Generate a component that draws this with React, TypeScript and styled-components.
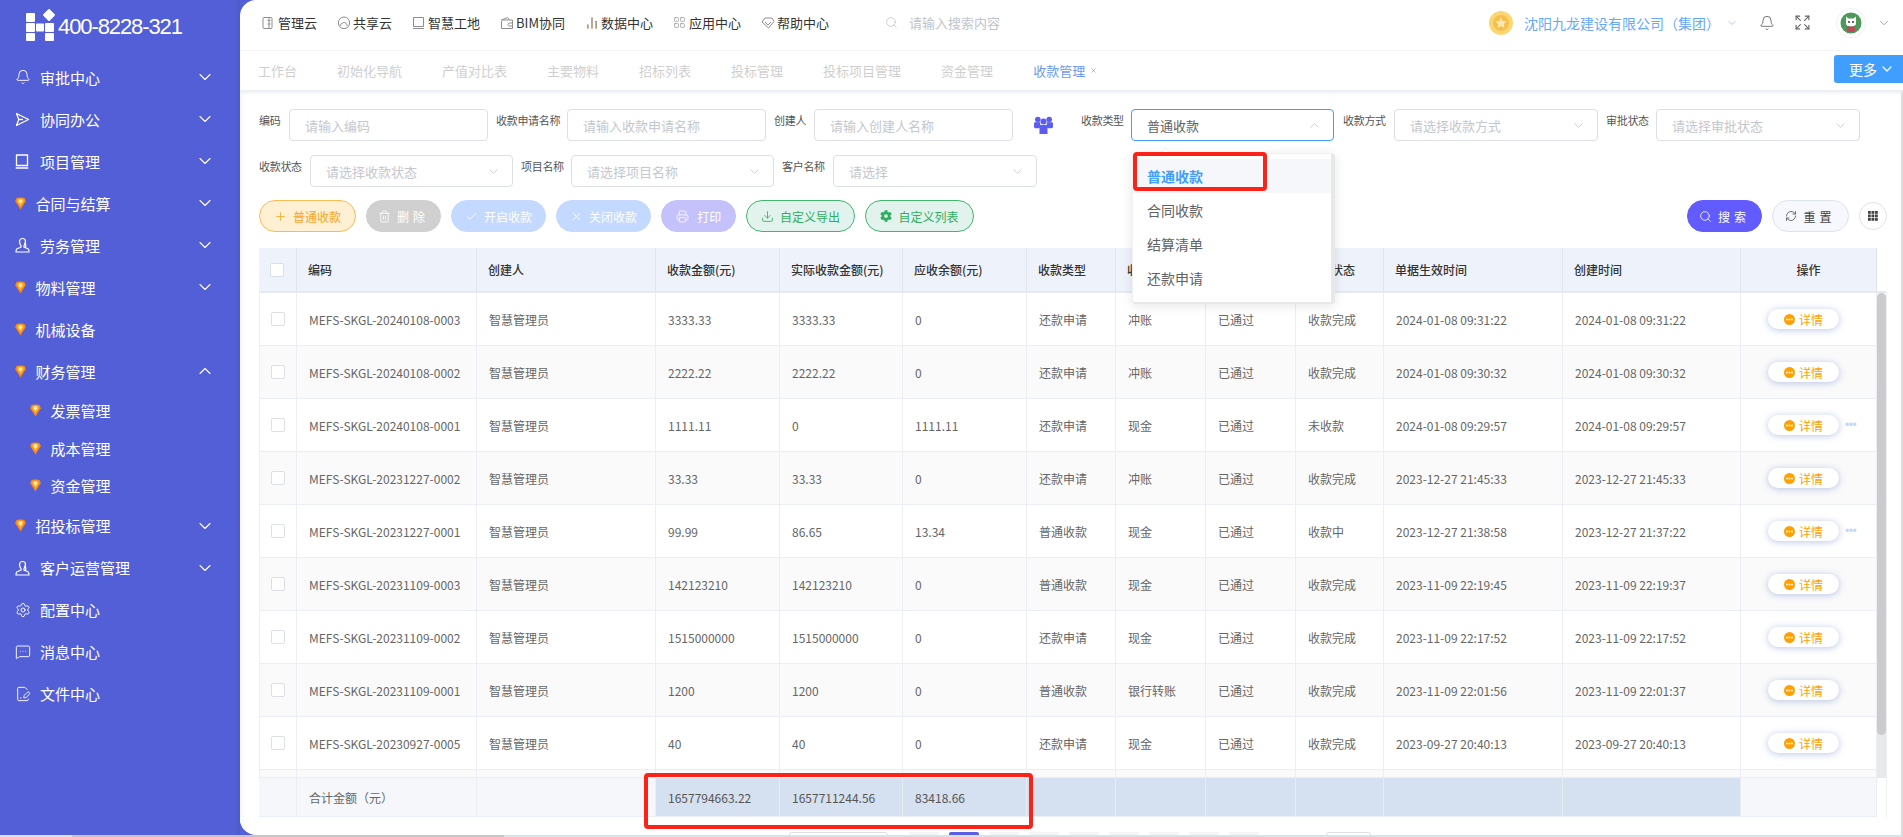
import React from 'react';
import styled, { createGlobalStyle } from 'styled-components';
import {
  Bell, ChevronDown, ChevronUp, Settings, MessageSquareMore, FilePenLine, Search, Expand,
  Plus, Trash2, Check, X, Printer, Download, RefreshCw, LayoutGrid, ChartNoAxesColumn,
} from 'lucide-react';
import { FaCog } from 'react-icons/fa';

const SANS = '"Noto Sans CJK SC", "Noto Sans", sans-serif';

const Global = createGlobalStyle`
  html, body { margin: 0; padding: 0; height: 837px; overflow: hidden; background: #fff; }
  body { font-family: ${SANS}; }
  * { box-sizing: border-box; }
`;

const Page = styled.div`
  width: 1903px;
  height: 837px;
  overflow: hidden;
  background: #535fd6;
  display: flex;
  flex-direction: column;
`;
const Body = styled.div`
  display: flex;
  height: 835px;
`;
const PageBar = styled.div`
  height: 2px;
  background: #d2e6ec;
  padding-left: 72px;
`;
const PageThumb = styled.div`
  width: 432px;
  height: 2px;
  background: #c6c6c6;
`;

/* ---------- sidebar ---------- */
const Sidebar = styled.aside`
  width: 240px;
  flex: none;
  background: #535fd6;
  color: #fff;
  border-right: 3px solid #4f5acb;
`;
const Brand = styled.div`
  height: 56px;
  display: flex;
  align-items: flex-start;
  padding: 9px 0 0 26px;
  gap: 3px;
`;
const BrandPhone = styled.span`
  margin-top: 2px;
  font-family: "Liberation Sans", Arial, sans-serif;
  font-size: 22px;
  line-height: 32px;
  letter-spacing: -1.1px;
  color: #fff;
  white-space: nowrap;
`;
const NavRow = styled.div<{ $sub?: boolean }>`
  display: flex;
  align-items: center;
  height: ${p => (p.$sub ? '37.5px' : '42px')};
  padding-left: ${p => (p.$sub ? '30px' : '15px')};
  padding-right: 22px;
  font-size: 15px;
  white-space: nowrap;
`;
const NavIcon = styled.span<{ $gem?: boolean }>`
  width: ${p => (p.$gem ? '20.5px' : '25px')};
  flex: none;
  display: flex;
  align-items: center;
`;
const NavChevron = styled.span`
  margin-left: auto;
  display: flex;
`;

const Gem = () => (
  <svg width="11" height="13" viewBox="0 0 12 15">
    <path d="M1 1.5 L4 .5 H8 L11 1.5 L12 5 L6 14.5 L0 5 Z" fill="#f7861c" />
    <path d="M3 2 H9 L10 5 L6 11 L2 5 Z" fill="#fbb52a" />
    <path d="M4.5 2.5 H7.5 L8 5 L6 8 L4 5 Z" fill="#ffeeb0" />
  </svg>
);
const WorkerIcon = () => (
  <svg width="15" height="16" viewBox="0 0 15 16" fill="none" stroke="#fff" strokeWidth="1.2">
    <path d="M4.5 4.5a3 3 0 1 1 6 0c0 2-1 3.5-1.5 4.2v1.5l4 1.6c.8.4 1 1 1 3.2H1c0-2.2.2-2.8 1-3.2l4-1.6V8.7C5.5 8 4.5 6.500 4.5 4.5z" />
    <path d="M9 6c2 0 2.500 3 1 5" />
  </svg>
);
const PlaneIcon = () => (
  <svg width="15" height="15" viewBox="0 0 15 15" fill="none" stroke="#fff" strokeWidth="1.3" strokeLinejoin="round">
    <path d="M1.500 1.500L13.500 7.500L1.500 13.500L3.800 7.500Z" />
    <path d="M3.800 7.500H8" />
  </svg>
);
const ProjectIcon = () => (
  <svg width="14" height="15" viewBox="0 0 14 15" fill="none" stroke="#fff" strokeWidth="1.3">
    <path d="M1.500 1h11v10.500h-11zM.7 14h12.600" />
  </svg>
);
const IWhite = { size: 16, strokeWidth: 1.4, color: '#fff' };

type NavDef = { label: string; icon: React.ReactNode; gem?: boolean; chev?: 'down' | 'up'; sub?: boolean };
const nav: NavDef[] = [
  { label: '审批中心', icon: <Bell {...IWhite} />, chev: 'down' },
  { label: '协同办公', icon: <PlaneIcon />, chev: 'down' },
  { label: '项目管理', icon: <ProjectIcon />, chev: 'down' },
  { label: '合同与结算', icon: <Gem />, gem: true, chev: 'down' },
  { label: '劳务管理', icon: <WorkerIcon />, chev: 'down' },
  { label: '物料管理', icon: <Gem />, gem: true, chev: 'down' },
  { label: '机械设备', icon: <Gem />, gem: true },
  { label: '财务管理', icon: <Gem />, gem: true, chev: 'up' },
  { label: '发票管理', icon: <Gem />, gem: true, sub: true },
  { label: '成本管理', icon: <Gem />, gem: true, sub: true },
  { label: '资金管理', icon: <Gem />, gem: true, sub: true },
  { label: '招投标管理', icon: <Gem />, gem: true, chev: 'down' },
  { label: '客户运营管理', icon: <WorkerIcon />, chev: 'down' },
  { label: '配置中心', icon: <Settings {...IWhite} /> },
  { label: '消息中心', icon: <MessageSquareMore {...IWhite} /> },
  { label: '文件中心', icon: <FilePenLine {...IWhite} /> },
];

/* ---------- main ---------- */
const Main = styled.main`
  flex: 1;
  min-width: 0;
  background: #fff;
  border-radius: 16px 0 0 16px;
  overflow: hidden;
  display: flex;
  flex-direction: column;
`;
const Header = styled.header`
  height: 50px;
  flex: none;
  display: flex;
  align-items: center;
  padding: 0 12px 5px 22px;
`;
const TopLink = styled.a`
  display: flex;
  align-items: center;
  margin-right: 20px;
  font-size: 13px;
  color: #333;
  white-space: nowrap;
`;
const TopIcon = styled.span`
  width: 16px;
  flex: none;
  display: flex;
`;
const SearchBox = styled.div`
  display: flex;
  align-items: center;
  gap: 11px;
  margin-left: 36px;
  font-size: 13px;
  color: #c0c4cc;
`;
const HeaderRight = styled.div`
  margin-left: auto;
  display: flex;
  align-items: center;
`;
const Company = styled.span`
  margin-left: 11px;
  font-size: 14px;
  color: #66a8ff;
  white-space: nowrap;
`;
const IconSlot = styled.span<{ $ml: number }>`
  display: flex;
  margin-left: ${p => p.$ml}px;
`;
const Tabs = styled.nav`
  height: 40px;
  flex: none;
  position: relative;
  z-index: 2;
  display: flex;
  align-items: center;
  padding-left: 18px;
  gap: 40px;
  border-top: 1px solid #f4f4f5;
  box-shadow: 0 3px 3px #eceef1;
`;
const Tab = styled.span<{ $active?: boolean }>`
  font-size: 13px;
  color: ${p => (p.$active ? '#6e99f2' : '#cfcfcf')};
  white-space: nowrap;
  display: flex;
  align-items: center;
  gap: 5px;
`;
const MoreButton = styled.button`
  position: absolute;
  right: 0;
  top: 4px;
  width: 69px;
  height: 28px;
  border: 0;
  border-radius: 3px 0 0 3px;
  background: #409eff;
  color: #fff;
  font: 14px ${SANS};
  display: flex;
  align-items: center;
  padding: 0 8px 0 15px;
  justify-content: space-between;
`;

const Content = styled.section`
  flex: 1;
  min-height: 0;
  position: relative;
  padding: 19px 14px 0 15px;
  border-left: 4px solid #f8faff;
  border-right: 2px solid #dcdcdc;
`;
const FilterRow = styled.div`
  display: flex;
  align-items: flex-start;
  height: 32px;
  margin-bottom: 14px;
`;
const FieldLabel = styled.label<{ $w: number; $ml?: number }>`
  width: ${p => p.$w}px;
  margin-left: ${p => p.$ml ?? 0}px;
  flex: none;
  font-size: 11px;
  letter-spacing: -0.3px;
  line-height: 23px;
  color: #555;
  white-space: nowrap;
`;
const Control = styled.div<{ $w: number; $focus?: boolean }>`
  width: ${p => p.$w}px;
  height: 32px;
  flex: none;
  position: relative;
  display: flex;
  align-items: center;
  justify-content: space-between;
  padding: 0 11px 0 15px;
  border: 1px solid ${p => (p.$focus ? '#409eff' : '#dcdfe6')};
  border-radius: 4px;
  font-size: 13px;
  color: #c4c7ce;
  background: #fff;
`;
const ControlValue = styled.span`
  color: #606266;
`;
const PeopleSlot = styled.span`
  width: 19px;
  margin: 7px 28px 0 21px;
  flex: none;
  display: flex;
`;
const Dropdown = styled.ul`
  position: absolute;
  top: 43px;
  left: 0;
  width: 203px;
  height: 151px;
  margin: 0;
  padding: 5px 0 0;
  list-style: none;
  background: #fff;
  border: 1px solid #eef0f3;
  border-right: 4px solid #e7e9e9;
  border-bottom: 2px solid #e7e9e9;
  border-radius: 4px;
  box-shadow: 0 2px 12px rgba(0, 0, 0, 0.1);
  z-index: 10;
  &::before {
    content: '';
    position: absolute;
    top: -5px;
    left: 28px;
    width: 8px;
    height: 8px;
    background: #fff;
    transform: rotate(45deg);
    border-left: 1px solid #eef0f3;
    border-top: 1px solid #eef0f3;
  }
`;
const Option = styled.li<{ $on?: boolean }>`
  height: 34px;
  line-height: 34px;
  padding-left: 14px;
  font-size: 14px;
  font-weight: ${p => (p.$on ? 700 : 400)};
  color: ${p => (p.$on ? '#409eff' : '#606266')};
  background: ${p => (p.$on ? '#f5f7fa' : '#fff')};
`;
const RedBox = styled.div<{ $l: number; $t: number; $w: number; $h: number }>`
  position: absolute;
  left: ${p => p.$l}px;
  top: ${p => p.$t}px;
  width: ${p => p.$w}px;
  height: ${p => p.$h}px;
  border: 4px solid #fb2317;
  border-radius: 4px;
  z-index: 11;
  pointer-events: none;
`;

const ActionBar = styled.div`
  display: flex;
  justify-content: space-between;
  align-items: center;
  height: 32px;
  margin: -1px 0 16px;
`;
const ActionGroup = styled.div`
  display: flex;
  align-items: center;
  gap: 10px;
`;
const tones = {
  orange: ['#ffefd3', '#f9bb55', '#f6a623'],
  grey: ['#d0d0d0', '#d0d0d0', '#fff'],
  blue: ['#c4d9ff', '#c4d9ff', '#fff'],
  purple: ['#c4c1fb', '#c4c1fb', '#fff'],
  green: ['#e1f3ec', '#43b56f', '#2fae5f'],
  primary: ['#625cff', '#625cff', '#fff'],
  plain: ['#f6f8fd', '#dfe3ec', '#444'],
};
const Pill = styled.button<{ $tone: keyof typeof tones; $w: number; $wide?: boolean }>`
  width: ${p => p.$w}px;
  height: 32px;
  padding: 0;
  border-radius: 16px;
  border: 1px solid ${p => tones[p.$tone][1]};
  background: ${p => tones[p.$tone][0]};
  color: ${p => tones[p.$tone][2]};
  font: 12px ${SANS};
  letter-spacing: ${p => (p.$wide ? '4px' : '0')};
  display: flex;
  align-items: center;
  justify-content: center;
  gap: 6px;
  white-space: nowrap;
`;
const RoundTool = styled.button`
  width: 28px;
  height: 28px;
  padding: 0;
  border-radius: 50%;
  border: 1px solid #dfe3ec;
  background: #fff;
  color: #444;
  display: flex;
  align-items: center;
  justify-content: center;
`;

const columns = '38px 180px 179px 124px 123px 124px 89px 90px 90px 88px 179px 178px 136px';
const Table = styled.div`
  width: 1628px;
  border-right: 1px solid #ebeef5;
  position: relative;
`;
const TableHead = styled.div`
  display: grid;
  grid-template-columns: ${columns} 9px;
  height: 45px;
  border-bottom: 2px solid #e6e9f0;
`;
const HeadCell = styled.div<{ $center?: boolean }>`
  background: #eef2fb;
  border-right: 1px solid #e3e5ea;
  padding-left: ${p => (p.$center ? '0' : '11px')};
  font-size: 12px;
  font-weight: 500;
  color: #333;
  display: flex;
  align-items: center;
  justify-content: ${p => (p.$center ? 'center' : 'flex-start')};
  white-space: nowrap;
  &:last-child { background: #fff; border-right: 0; }
`;
const TableScroll = styled.div`
  display: flex;
`;
const TableRows = styled.div`
  width: 1618px;
  flex: none;
`;
const Row = styled.div<{ $even?: boolean; $h?: number }>`
  display: grid;
  grid-template-columns: ${columns};
  height: ${p => p.$h ?? 53}px;
  border-bottom: 1px solid #ebeef5;
  background: ${p => (p.$even ? '#fafafa' : '#fff')};
`;
const Cell = styled.div`
  border-right: 1px solid #ebeef5;
  padding-left: 12px;
  font-size: 12px;
  color: #666;
  display: flex;
  align-items: center;
  white-space: nowrap;
  &:first-child { border-left: 1px solid #ebeef5; }
`;
const CheckCell = styled(Cell)`
  padding-left: 11px;
`;
const CheckBox = styled.span`
  width: 14px;
  height: 14px;
  background: #fff;
  border: 1px solid #dcdfe6;
  border-radius: 2px;
`;
const OpCell = styled(Cell)`
  padding-left: 27px;
  gap: 6px;
`;
const DetailButton = styled.button`
  width: 71px;
  height: 20px;
  padding: 0;
  border: 0;
  border-radius: 10px;
  background: #fff;
  color: #ffa000;
  font: 12px ${SANS};
  box-shadow: 0 1px 7px rgba(75, 105, 190, 0.38);
  display: flex;
  align-items: center;
  justify-content: center;
  gap: 4px;
`;
const Dots = styled.span`
  color: #c4d6fb;
  font-family: "Liberation Sans", sans-serif;
  font-size: 12px;
  line-height: 1;
  letter-spacing: -0.4px;
`;
const ScrollTrack = styled.div`
  width: 9px;
  height: 485px;
  flex: none;
  background: #e8eaea;
  border-radius: 5px 5px 0 0;
`;
const ScrollThumb = styled.div`
  height: 442px;
  background: #cbcbcd;
  border-radius: 5px;
`;
const SummaryRow = styled.div`
  display: grid;
  grid-template-columns: ${columns};
  width: 1618px;
  height: 39px;
  position: relative;
  border-bottom: 1px solid #ebeef5;
`;
const SumCell = styled.div<{ $blue?: boolean; $dark?: boolean }>`
  background: ${p => (p.$blue ? '#d5e1f0' : '#f5f7fb')};
  border-right: 1px solid ${p => (p.$blue ? '#e6edf5' : '#ebeef5')};
  padding-left: 12px;
  font-size: 12px;
  color: ${p => (p.$dark ? '#555' : '#666')};
  display: flex;
  align-items: center;
  white-space: nowrap;
`;
const Pager = styled.div`
  display: flex;
  margin: 15px 0 0 530px;
  gap: 10px;
  align-items: flex-start;
`;
const PagerSelect = styled.div`
  width: 99px;
  height: 28px;
  margin-right: 11px;
  border: 1px solid #dcdfe6;
  border-radius: 3px;
`;
const PagerBtn = styled.div<{ $on?: boolean }>`
  width: 30px;
  height: 28px;
  border-radius: 2px;
  background: ${p => (p.$on ? '#5b5fe8' : '#f4f4f5')};
`;
const PagerInput = styled.div`
  width: 45px;
  height: 28px;
  margin-left: 57px;
  border: 1px solid #dcdfe6;
  border-radius: 3px;
`;

/* ---------- drawn icons ---------- */
const g = { fill: 'none', stroke: '#8d8d8d', strokeWidth: 1 };
const IconPanel = () => (
  <svg width="12" height="14" viewBox="0 0 12 14" {...g}><rect x="1" y="1.5" width="9" height="11" rx="1" /><path d="M7 1.5v11M8.5 4.5h-3M8.5 8h-3" /></svg>
);
const IconCloud = () => (
  <svg width="14" height="14" viewBox="0 0 14 14" {...g}><path d="M7 1a5.6 5.6 0 0 1 5.6 6c0 3.5-2.5 5.6-5.6 5.6S1.4 10.5 1.4 7A5.6 5.6 0 0 1 7 1z" /><path d="M4 10c-1-1.500 0-3 1.500-2.600C6 5.800 8.500 6 8.800 7.500 10 7.500 10.500 9 9.800 10" /></svg>
);
const IconBook = () => (
  <svg width="13" height="14" viewBox="0 0 13 14" {...g}><path d="M1.500 1.500h10v9h-10zM1 12.500h11" /></svg>
);
const IconWallet = () => (
  <svg width="14" height="14" viewBox="0 0 14 14" {...g}><path d="M1.500 5v7.500h11V4h-11l6-2.500 2 2.500" /><path d="M12.500 7h-3a1.500 1.500 0 0 0 0 3h3" /></svg>
);
const IconTagDiamond = () => (
  <svg width="14" height="14" viewBox="0 0 14 14" {...g}><path d="M4 2h7l2 3.500L7.500 12 1 6z" /><path d="M4 6l3 3 3-3" /></svg>
);
const PeopleIcon = () => (
  <svg width="19" height="18" viewBox="0 0 19 18" fill="#5b5cf0">
    <circle cx="3.800" cy="3.600" r="2.800" />
    <circle cx="15.200" cy="3.600" r="2.800" />
    <path d="M0 7.500c0-.8.600-1.200 1.400-1.200h4.600l.6 4.500-1.400 1.500H1.500C.6 12.300 0 11.500 0 10.800zM19 7.500c0-.8-.6-1.200-1.400-1.200H13l-.6 4.500 1.400 1.500h3.700c.9 0 1.500-.8 1.500-1.500z" />
    <circle cx="9.500" cy="5.500" r="3" />
    <path d="M5.500 10.500c0-1 .8-1.500 1.500-1.500h5c.8 0 1.500.5 1.500 1.500V18h-8z" />
  </svg>
);
const GridDots = () => (
  <svg width="10" height="10" viewBox="0 0 10 10" fill="#444">
    {[0, 3.5, 7].flatMap(y => [0, 3.5, 7].map(x => <rect key={`${x}-${y}`} x={x} y={y} width="2.800" height="2.800" />))}
  </svg>
);
const Medal = () => (
  <svg width="24" height="24" viewBox="0 0 24 24">
    <circle cx="12" cy="12" r="12" fill="#fbd774" />
    <circle cx="12" cy="12" r="8" fill="#f5c04f" />
    <path d="M12 6.500l1.700 3.600 3.800.5-2.800 2.600.8 3.900-3.500-2-3.500 2 .8-3.900-2.800-2.600 3.800-.5z" fill="#fde9b0" />
  </svg>
);
const Avatar = () => (
  <svg width="30" height="30" viewBox="0 0 30 30">
    <circle cx="15" cy="15" r="14.500" fill="#fff" stroke="#eef0f2" />
    <circle cx="15" cy="15" r="10.500" fill="#4c9a5a" />
    <path d="M10 8.500l2.500 2h5l2.500-2v7c0 2-2 3-5 3s-5-1-5-3z" fill="#fff" />
    <circle cx="13" cy="14" r=".9" fill="#222" /><circle cx="17" cy="14" r=".9" fill="#222" />
    <path d="M11.500 18.500h7l1 4.500a10 10 0 0 1-9 0z" fill="#c0485c" />
  </svg>
);
const Logo = () => (
  <svg width="29" height="32" viewBox="0 0 29 32" fill="#fff">
    <rect x="0" y="4" width="9" height="9" rx="1" />
    <rect x="0" y="14" width="9" height="9" rx="1" />
    <rect x="10" y="14.500" width="8" height="8" rx="1" />
    <rect x="19" y="14" width="9" height="9" rx="1" />
    <rect x="0" y="24" width="9" height="8" rx="1" />
    <rect x="19" y="24" width="9" height="8" rx="1" />
    <rect x="18.500" y="1.500" width="9" height="9" rx="1" transform="rotate(45 23 6)" />
  </svg>
);
const DotCircle = () => (
  <svg width="11" height="11" viewBox="0 0 11 11">
    <circle cx="5.500" cy="5.500" r="5.500" fill="#ffa000" />
    <circle cx="3" cy="5.500" r=".9" fill="#fff" /><circle cx="5.500" cy="5.500" r=".9" fill="#fff" /><circle cx="8" cy="5.500" r=".9" fill="#fff" />
  </svg>
);

/* ---------- data ---------- */
type R = { code: string; a: string; b: string; c: string; type: string; way: string; st: string; t1: string; t2: string; more?: boolean };
const rows: R[] = [
  { code: '20240108-0003', a: '3333.33', b: '3333.33', c: '0', type: '还款申请', way: '冲账', st: '收款完成', t1: '2024-01-08 09:31:22', t2: '2024-01-08 09:31:22' },
  { code: '20240108-0002', a: '2222.22', b: '2222.22', c: '0', type: '还款申请', way: '冲账', st: '收款完成', t1: '2024-01-08 09:30:32', t2: '2024-01-08 09:30:32' },
  { code: '20240108-0001', a: '1111.11', b: '0', c: '1111.11', type: '还款申请', way: '现金', st: '未收款', t1: '2024-01-08 09:29:57', t2: '2024-01-08 09:29:57', more: true },
  { code: '20231227-0002', a: '33.33', b: '33.33', c: '0', type: '还款申请', way: '冲账', st: '收款完成', t1: '2023-12-27 21:45:33', t2: '2023-12-27 21:45:33' },
  { code: '20231227-0001', a: '99.99', b: '86.65', c: '13.34', type: '普通收款', way: '现金', st: '收款中', t1: '2023-12-27 21:38:58', t2: '2023-12-27 21:37:22', more: true },
  { code: '20231109-0003', a: '142123210', b: '142123210', c: '0', type: '普通收款', way: '现金', st: '收款完成', t1: '2023-11-09 22:19:45', t2: '2023-11-09 22:19:37' },
  { code: '20231109-0002', a: '1515000000', b: '1515000000', c: '0', type: '还款申请', way: '现金', st: '收款完成', t1: '2023-11-09 22:17:52', t2: '2023-11-09 22:17:52' },
  { code: '20231109-0001', a: '1200', b: '1200', c: '0', type: '普通收款', way: '银行转账', st: '收款完成', t1: '2023-11-09 22:01:56', t2: '2023-11-09 22:01:37' },
  { code: '20230927-0005', a: '40', b: '40', c: '0', type: '还款申请', way: '现金', st: '收款完成', t1: '2023-09-27 20:40:13', t2: '2023-09-27 20:40:13' },
];
const heads = ['编码', '创建人', '收款金额(元)', '实际收款金额(元)', '应收余额(元)', '收款类型', '收款方式', '审批状态', '收款状态', '单据生效时间', '创建时间'];
const topLinks: [string, React.ReactNode][] = [
  ['管理云', <IconPanel />],
  ['共享云', <IconCloud />],
  ['智慧工地', <IconBook />],
  ['BIM协同', <IconWallet />],
  ['数据中心', <ChartNoAxesColumn size={14} color="#8d6b4a" strokeWidth={2} />],
  ['应用中心', <LayoutGrid size={13} color="#8d8d8d" strokeWidth={1.2} />],
  ['帮助中心', <IconTagDiamond />],
];
const tabs = ['工作台', '初始化导航', '产值对比表', '主要物料', '招标列表', '投标管理', '投标项目管理', '资金管理'];
const chevron = <ChevronDown size={15} color="#c0c4cc" strokeWidth={1.3} />;
const small = { size: 13, strokeWidth: 1.5 };

export default function App() {
  return (
    <Page>
      <Global />
      <Body>
        <Sidebar>
          <Brand>
            <Logo />
            <BrandPhone>400-8228-321</BrandPhone>
          </Brand>
          {nav.map(n => (
            <NavRow key={n.label} $sub={n.sub}>
              <NavIcon $gem={n.gem}>{n.icon}</NavIcon>
              {n.label}
              {n.chev && (
                <NavChevron>
                  {n.chev === 'down' ? <ChevronDown size={20} strokeWidth={1.3} /> : <ChevronUp size={20} strokeWidth={1.3} />}
                </NavChevron>
              )}
            </NavRow>
          ))}
        </Sidebar>
        <Main>
          <Header>
            {topLinks.map(([t, i]) => (
              <TopLink key={t}>
                <TopIcon>{i}</TopIcon>
                {t}
              </TopLink>
            ))}
            <SearchBox>
              <Search size={13} color="#c0c4cc" strokeWidth={1.4} />
              请输入搜索内容
            </SearchBox>
            <HeaderRight>
              <Medal />
              <Company>沈阳九龙建设有限公司（集团）</Company>
              <IconSlot $ml={6}><ChevronDown size={12} color="#a9c8f5" /></IconSlot>
              <IconSlot $ml={21}><Bell size={16} color="#555" strokeWidth={1.2} /></IconSlot>
              <IconSlot $ml={19}><Expand size={17} color="#666" strokeWidth={1.6} /></IconSlot>
              <IconSlot $ml={25}><Avatar /></IconSlot>
              <IconSlot $ml={11}><ChevronDown size={14} color="#999" strokeWidth={1.5} /></IconSlot>
            </HeaderRight>
          </Header>
          <Tabs>
            {tabs.map(t => <Tab key={t}>{t}</Tab>)}
            <Tab $active>收款管理<X size={7} strokeWidth={2} /></Tab>
            <MoreButton>更多<ChevronDown size={16} strokeWidth={1.8} /></MoreButton>
          </Tabs>
          <Content>
            <FilterRow>
              <FieldLabel $w={30}>编码</FieldLabel>
              <Control $w={199}>请输入编码</Control>
              <FieldLabel $w={71} $ml={8}>收款申请名称</FieldLabel>
              <Control $w={199}>请输入收款申请名称</Control>
              <FieldLabel $w={40} $ml={8}>创建人</FieldLabel>
              <Control $w={199}>请输入创建人名称</Control>
              <PeopleSlot><PeopleIcon /></PeopleSlot>
              <FieldLabel $w={50}>收款类型</FieldLabel>
              <Control $w={203} $focus>
                <ControlValue>普通收款</ControlValue>
                <ChevronUp size={15} color="#c0c4cc" strokeWidth={1.3} />
                <Dropdown>
                  <Option $on>普通收款</Option>
                  <Option>合同收款</Option>
                  <Option>结算清单</Option>
                  <Option>还款申请</Option>
                  <RedBox $l={0} $t={-2} $w={134} $h={39} />
                </Dropdown>
              </Control>
              <FieldLabel $w={51} $ml={9}>收款方式</FieldLabel>
              <Control $w={204}>请选择收款方式{chevron}</Control>
              <FieldLabel $w={50} $ml={8}>审批状态</FieldLabel>
              <Control $w={204}>请选择审批状态{chevron}</Control>
            </FilterRow>
            <FilterRow>
              <FieldLabel $w={51}>收款状态</FieldLabel>
              <Control $w={203}>请选择收款状态{chevron}</Control>
              <FieldLabel $w={50} $ml={8}>项目名称</FieldLabel>
              <Control $w={203}>请选择项目名称{chevron}</Control>
              <FieldLabel $w={51} $ml={8}>客户名称</FieldLabel>
              <Control $w={204}>请选择{chevron}</Control>
            </FilterRow>
            <ActionBar>
              <ActionGroup>
                <Pill $tone="orange" $w={97}><Plus {...small} />普通收款</Pill>
                <Pill $tone="grey" $w={75} $wide><Trash2 {...small} />删除</Pill>
                <Pill $tone="blue" $w={95}><Check {...small} />开启收款</Pill>
                <Pill $tone="blue" $w={95}><X {...small} />关闭收款</Pill>
                <Pill $tone="purple" $w={75}><Printer {...small} />&nbsp;打印</Pill>
                <Pill $tone="green" $w={109}><Download {...small} />自定义导出</Pill>
                <Pill $tone="green" $w={109}><FaCog size={12} />自定义列表</Pill>
              </ActionGroup>
              <ActionGroup>
                <Pill $tone="primary" $w={75} $wide><Search {...small} />搜索</Pill>
                <Pill $tone="plain" $w={77} $wide><RefreshCw size={12} strokeWidth={1.5} />重置</Pill>
                <RoundTool><GridDots /></RoundTool>
              </ActionGroup>
            </ActionBar>
            <Table>
              <TableHead>
                <HeadCell><CheckBox /></HeadCell>
                {heads.map(h => <HeadCell key={h}>{h}</HeadCell>)}
                <HeadCell $center>操作</HeadCell>
                <HeadCell />
              </TableHead>
              <TableScroll>
                <TableRows>
                  {rows.map((r, i) => (
                    <Row key={r.code} $even={i % 2 === 1}>
                      <CheckCell><CheckBox /></CheckCell>
                      <Cell>MEFS-SKGL-{r.code}</Cell>
                      <Cell>智慧管理员</Cell>
                      <Cell>{r.a}</Cell>
                      <Cell>{r.b}</Cell>
                      <Cell>{r.c}</Cell>
                      <Cell>{r.type}</Cell>
                      <Cell>{r.way}</Cell>
                      <Cell>已通过</Cell>
                      <Cell>{r.st}</Cell>
                      <Cell>{r.t1}</Cell>
                      <Cell>{r.t2}</Cell>
                      <OpCell>
                        <DetailButton><DotCircle />详情</DetailButton>
                        {r.more && <Dots>•••</Dots>}
                      </OpCell>
                    </Row>
                  ))}
                  <Row $even $h={8}>
                    {Array.from({ length: 13 }, (_, i) => <Cell key={i} />)}
                  </Row>
                </TableRows>
                <ScrollTrack><ScrollThumb /></ScrollTrack>
              </TableScroll>
              <SummaryRow>
                <SumCell />
                <SumCell>合计金额（元）</SumCell>
                <SumCell />
                <SumCell $blue $dark>1657794663.22</SumCell>
                <SumCell $blue $dark>1657711244.56</SumCell>
                <SumCell $blue $dark>83418.66</SumCell>
                {Array.from({ length: 6 }, (_, i) => <SumCell key={i} $blue />)}
                <SumCell />
                <RedBox $l={385} $t={-5} $w={389} $h={56} />
              </SummaryRow>
            </Table>
            <Pager>
              <PagerSelect />
              <PagerBtn />
              <PagerBtn $on />
              {Array.from({ length: 7 }, (_, i) => <PagerBtn key={i} />)}
              <PagerInput />
            </Pager>
          </Content>
        </Main>
      </Body>
      <PageBar><PageThumb /></PageBar>
    </Page>
  );
}
